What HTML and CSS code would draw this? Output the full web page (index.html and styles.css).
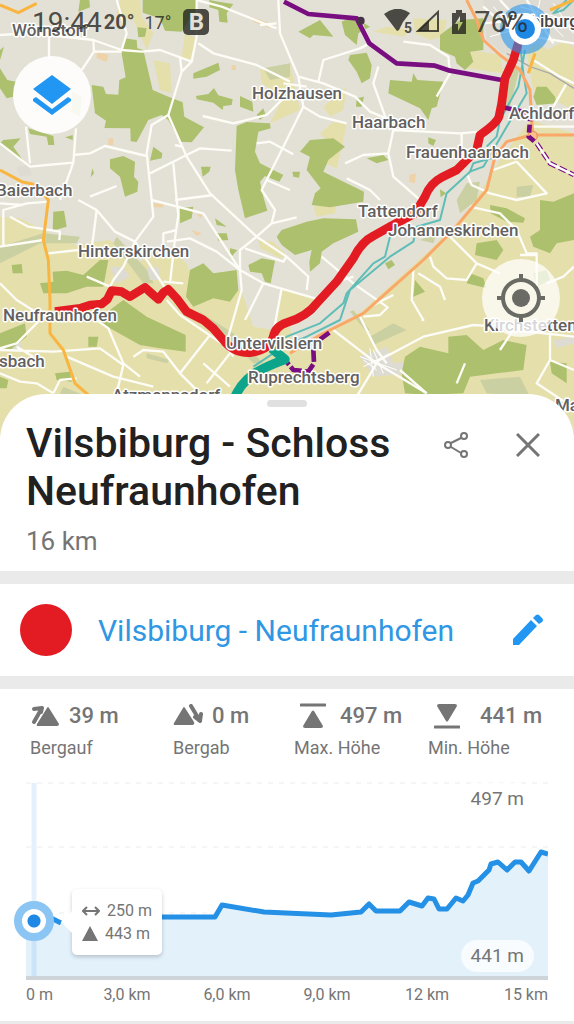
FILE: index.html
```html
<!DOCTYPE html>
<html lang="de">
<head>
<meta charset="UTF-8">
<meta name="viewport" content="width=device-width, initial-scale=1.0">
<title>Vilsbiburg - Schloss Neufraunhofen</title>
<link rel="stylesheet" href="styles.css">
</head>
<body>

<section class="map">
  <svg class="map-canvas" viewBox="0 0 574 440" preserveAspectRatio="xMidYMin slice" aria-label="Karte">
    <g transform="scale(.333333)">
      <rect class="land" width="1722" height="1320"/>

      <!-- fields -->
      <g class="field">
        <path d="M0 650L60 655L150 700L225 735L330 720L410 790L500 740L560 790L590 880L725 870L760 980L820 990L845 865L945 895L870 980L880 1040L1000 990L1090 930L1190 840L1290 750L1400 640L1500 480L1590 360L1722 400V1320H0Z"/>
        <path d="M1722 110L1640 150L1600 110L1580 160L1600 270L1722 330Z"/>
        <path d="M360 0H420L425 50L460 100L440 150L400 60L350 45Z"/>
        <path d="M460 180L510 190L515 280L480 270Z"/>
        <path d="M555 100L590 115L570 180L545 175Z"/>
        <path d="M780 210L870 190L900 330L810 370L850 290L785 250Z"/>
        <path d="M1000 365L1040 370L1030 420L1010 505L975 490L985 430L960 400Z"/>
        <path d="M1240 55L1340 60L1330 110L1290 120L1245 100Z"/>
        <path d="M1410 150L1500 165L1510 220L1400 205Z"/>
        <path d="M970 320L1040 260L1030 330L990 350Z"/>
        <path d="M940 620L1010 612L1005 640L950 650Z"/>
        <path d="M775 720L820 725L860 765L840 775L780 745Z"/>
        <path d="M1120 95L1160 80L1230 90L1210 110Z"/>
      </g>
      <g class="meadow">
        <path d="M1540 200L1560 200L1530 320L1500 350Z"/>
        <path d="M1370 600L1400 550L1440 545L1430 600L1380 640Z"/>
        <path d="M790 205L870 190V230L810 240Z"/>
        <path d="M350 710L450 820L460 850L430 850L340 730Z"/>
        <path d="M0 740L130 700L240 710L230 730L120 730L0 790Z"/>
        <path d="M1110 1010L1180 970L1220 990L1120 1035Z"/>
        <path d="M1440 1140L1560 1130L1590 1190L1460 1180Z"/>
        <path d="M440 1060L510 1080L500 1090L440 1075Z"/>
        <path d="M190 1160L250 1185L230 1200L180 1180Z"/>
        <path d="M1060 930L1110 990L1095 990L1050 935Z"/>
        <path d="M590 930L700 1000L790 1090L760 1090L680 1010Z"/>
        <path d="M1550 560L1600 555L1590 590L1550 590Z"/>
        <path d="M1260 720L1310 700L1300 730Z"/>
      </g>

      <!-- built-up areas -->
      <g class="town">
        <path d="M1450 0H1722V140L1650 110L1600 140L1510 160L1460 120Z"/>
        <path d="M1080 1070L1160 1040L1180 1090L1240 1080L1230 1120L1120 1130Z"/>
        <path d="M50 500L85 495L95 525L60 530Z"/>
        <path d="M330 800L370 800L390 830L350 850Z"/>
        <path d="M440 805L475 800L480 840L450 840Z"/>
        <path d="M30 1020L60 1015L65 1050L40 1055Z"/>
        <path d="M1660 1020L1722 1010V1030L1670 1045Z"/>
      </g>
      <g class="farm">
        <path d="M290 155L325 165L320 185L290 175Z"/>
        <path d="M325 415H340V435H325Z"/>
        <path d="M750 50L800 65L810 85L760 65Z"/>
        <path d="M460 610H490V622H460Z"/>
        <path d="M590 645L605 640V655Z"/>
        <path d="M575 690L605 700L590 708Z"/>
        <path d="M1228 525L1248 520L1245 550L1228 545Z"/>
        <path d="M695 195H708V210H695Z"/>
      </g>

      <!-- woods -->
      <g class="wood">
        <path d="M372 115L410 120L412 145L430 150L458 270L500 288L548 307L553 350L612 382L575 427L540 425L505 360L485 345L445 360L410 426L392 424L391 385L313 384L318 362L285 340L275 255L310 260L318 282L355 284L358 240L377 232L365 160Z"/>
        <path d="M428 0H590V45L570 55L545 95L495 92L480 55L428 38Z"/>
        <path d="M240 0H268L270 22L235 35Z"/>
        <path d="M412 82L440 85L435 110L415 112Z"/>
        <path d="M628 0L655 5L700 12L680 40L683 68L658 65L655 30L628 22Z"/>
        <path d="M580 220L655 188L660 210L620 230L580 236Z"/>
        <path d="M588 288L625 282L642 264L655 286L698 298L695 315L670 318L668 330L640 308L590 298Z"/>
        <path d="M720 288L757 305L760 335L720 320Z"/>
        <path d="M770 345L790 325L797 345L780 360Z"/>
        <path d="M710 378L740 366L810 370L812 385L775 395L765 455L780 490L850 525L838 545L795 528L780 545L790 590L802 632L735 655L715 570L705 510Z"/>
        <path d="M0 205L22 240L48 245L40 290L20 295L0 265Z"/>
        <path d="M10 420L62 415L40 440L75 490L0 430Z"/>
        <path d="M85 385L160 408L163 435L145 435L140 410L90 402Z"/>
        <path d="M215 275L245 290L240 350L215 335Z"/>
        <path d="M330 478L370 468L405 485L402 530L415 545L412 575L375 590L360 530L330 505Z"/>
        <path d="M460 440L487 460L485 475L450 482Z"/>
        <path d="M603 500L632 500L628 515L608 530Z"/>
        <path d="M195 412L218 405V420Z"/>
        <path d="M277 505L282 520L272 532Z"/>
        <path d="M0 150L12 140L0 180Z"/>
        <path d="M895 95L960 60L1000 110L940 105L930 115Z"/>
        <path d="M1025 65L1060 50L1110 80L1075 100L1070 135L1035 105Z"/>
        <path d="M1050 165L1100 158L1115 195L1110 235L1085 250L1070 215L1045 180Z"/>
        <path d="M1170 240L1235 245L1240 220L1252 240L1330 245L1310 320L1295 325L1285 360L1260 325L1165 280Z"/>
        <path d="M1070 295L1092 290L1085 320H1068Z"/>
        <path d="M1320 105L1380 60L1450 55L1450 150L1410 155L1420 185L1395 210L1370 190L1365 170L1320 150Z"/>
        <path d="M900 455L930 420L1000 415L1035 440L985 480L970 515L1020 540L1092 575L1090 605L990 622L935 615L945 580L962 565L920 510L930 470Z"/>
        <path d="M830 710L845 690L920 665L970 655L1068 658L1075 695L1000 730L965 755L960 790L930 815L928 785L935 750L885 765L845 735Z"/>
        <path d="M877 515L900 515L897 533L880 530Z"/>
        <path d="M1285 412L1308 420L1300 438L1285 430Z"/>
        <path d="M1100 475L1150 465L1165 480L1130 490Z"/>
        <path d="M1320 568L1338 580L1322 592Z"/>
        <path d="M1610 260L1640 260L1665 290L1670 310L1610 315L1600 290Z"/>
        <path d="M1470 615L1520 625L1575 655L1570 668L1520 665L1472 640Z"/>
        <path d="M1620 600L1660 605L1722 580V720L1670 730L1650 760L1600 740L1590 710L1620 690Z"/>
        <path d="M1430 730L1490 720L1510 750L1490 780L1425 765Z"/>
        <path d="M1410 820L1450 835L1460 865L1400 850Z"/>
        <path d="M1245 840L1275 875L1240 890Z"/>
        <path d="M1345 1010L1400 1005L1450 1050L1510 1020L1580 1035L1570 1110L1490 1120L1410 1130L1390 1180L1280 1185L1215 1180L1205 1120L1215 1070L1260 1040L1345 1060Z"/>
        <path d="M1650 1085L1700 1090V1150L1655 1120Z"/>
        <path d="M1155 790L1175 780L1185 795L1165 808Z"/>
        <path d="M1600 820L1640 810L1650 840L1610 860Z"/>
        <path d="M160 635L192 632L200 680L158 692Z"/>
        <path d="M120 850L160 845L158 815L200 812L250 825L300 780L325 780L310 860L260 860L200 880L130 880Z"/>
        <path d="M570 810L610 790L640 820L710 810L715 870L690 905L640 895L580 920L558 890Z"/>
        <path d="M290 960L370 900L440 950L557 1005V1055L480 1045L420 1035L330 985Z"/>
        <path d="M745 795L785 775L825 782L812 850L795 845L785 820L750 815Z"/>
        <path d="M645 655L680 680L650 675Z"/>
        <path d="M650 700L680 700L685 720L655 722Z"/>
        <path d="M540 625L580 620L575 655L540 670Z"/>
        <path d="M35 795L65 792L68 820L38 820Z"/>
        <path d="M0 1000L75 970L80 1010L30 1050L0 1040Z"/>
        <path d="M165 1120L210 1115L215 1145L170 1140Z"/>
        <path d="M265 1010L295 1010L290 1040H265Z"/>
        <path d="M0 1130L25 1140L20 1165H0Z"/>
        <path d="M690 745L712 750L690 775Z"/>
      </g>

      <!-- minor roads -->
      <g class="road">
        <path d="M350 0L380 100L365 150L425 155L480 150L575 185L590 110L590 0"/>
        <path d="M0 105L80 100L147 105L280 120L365 150M147 105V180M280 120L282 155L365 155M282 155L245 210"/>
        <path d="M575 185L545 215L505 345L455 375L440 460L455 600L460 650L405 725"/>
        <path d="M505 345L560 470L630 580L770 710L720 750L720 810L725 870L685 1010"/>
        <path d="M860 420L785 570L825 630L815 670L770 710M815 670L890 652M770 710L860 770L925 830L920 870"/>
        <path d="M610 640L720 810L790 850L945 895M735 745L850 785L860 770M790 850L735 960M845 865L820 1000"/>
        <path d="M540 170L545 215M595 130L640 160L770 195L870 245"/>
        <path d="M608 348L700 370L800 345L840 305L860 290"/>
        <path d="M0 430L90 500L140 495L220 488L228 385M78 380L90 490M220 488L180 600M220 465L270 460L315 438L440 468"/>
        <path d="M450 520L560 465L600 445L695 452M520 490L530 600L535 645"/>
        <path d="M525 435L545 440M270 590L350 558M640 585L525 600"/>
        <path d="M835 0L840 100L895 230L910 320L860 420M770 430L810 425L880 463M800 540L870 570"/>
        <path d="M895 230L970 250L1065 290L1110 335L1170 360M1135 200L1120 250L1170 390"/>
        <path d="M1080 60L1110 130L1080 145L970 180L955 245M1210 125L1290 135L1345 170L1350 220L1310 290"/>
        <path d="M1035 490L1090 465L1165 460L1180 390L1380 400L1440 395M1165 460L1180 530L1260 600M1040 535L1110 570L1140 600"/>
        <path d="M910 320L960 350L1040 370M850 250L920 260"/>
        <path d="M590 0L665 20L830 85M830 70L780 75"/>
        <path d="M1385 400V450M1400 520L1415 555L1470 580L1550 600L1640 580L1550 485M1480 510L1550 485"/>
        <path d="M0 610L70 615M10 740V630L80 610L145 605M30 650L85 680L180 695L178 720"/>
        <path d="M0 740L130 720M145 760L235 750L290 745"/>
        <path d="M235 600L290 630L345 695L405 725L460 810L500 870M290 630L280 710L275 740"/>
        <path d="M260 830L330 860L340 840L370 800L405 725"/>
        <path d="M455 600L610 640M535 645L525 715L510 850M490 750V700L530 690M500 725L570 715L650 755L720 810"/>
        <path d="M490 845L550 850M500 900L540 945L680 1040L700 1070"/>
        <path d="M0 850L50 900L130 950L50 1030L0 1045M290 960L325 985L370 1090L420 1130"/>
        <path d="M0 1050L160 1055L300 1045L370 1095L350 1180M200 1070L340 1130L460 1160M50 1040L100 1070"/>
        <path d="M0 1120L60 1145L110 1150L160 1180M160 1180L180 1140L230 1135"/>
        <path d="M400 1070L430 1050L490 1055L540 1120L600 1180M540 1120L630 1005M610 1090L690 1160M690 1060L620 1150"/>
        <path d="M965 770L1060 850L1160 920M1030 840L1060 830M1110 920L1180 885M1080 950L1130 1050L1160 1090"/>
        <path d="M1000 990L1130 1090L1280 1180M1120 1090L1270 1010L1420 975L1500 980M1130 1090L1070 1190"/>
        <path d="M1240 810L1235 900L1270 960L1265 960M1255 820L1320 860L1335 900M1090 950L1140 945L1165 920"/>
        <path d="M1350 710L1430 790L1400 840L1340 835L1300 800L1290 770M1430 790L1500 820"/>
        <path d="M1410 620L1500 640L1550 690L1580 760L1610 760V880M1560 765H1610"/>
        <path d="M1640 850L1690 830L1722 800"/>
        <path d="M1500 1050L1540 990L1722 1010M1650 1000V1080L1610 1150L1700 1210M1650 1080L1722 1110"/>
        <path d="M1395 1090L1370 1150M1200 1110L1280 1180"/>
        <path d="M1450 20L1540 100L1722 130M1500 0L1600 110M1580 0L1660 130M1450 70L1560 60L1722 80"/>
        <path d="M1600 180L1680 230L1722 250M1700 250L1660 320M1600 380H1722"/>
      </g>
      <path class="street" d="M1080 1070L1190 1110M1090 1100L1170 1060M1120 1050L1150 1120M1090 1080L1130 1110M1110 1045L1120 1130M1480 20L1560 110M1600 20L1690 110M1620 0L1600 100M1660 10L1720 100M1560 20L1700 60M1470 110L1540 90"/>

      <!-- rail, river and main roads -->
      <path class="rail" d="M1520 160L1590 200L1650 220L1722 265"/>
      <path class="river" d="M1560 130L1570 220L1580 280L1520 380L1450 500L1410 515L1420 490L1490 470M1410 515L1340 580L1320 660L1250 680L1240 725L1170 770L1050 870L1020 960L920 1010L850 1040L760 1100M1575 150L1555 260L1500 360L1490 410L1460 440M1190 690L1170 710L1155 770L1120 790L1040 880L1030 910L960 970L860 1010L800 1040M1700 0L1660 40L1690 30L1722 0"/>
      <path class="main-road" d="M1400 0L1430 60L1450 120L1500 165L1560 210L1590 270L1598 405M1722 405L1595 405L1520 425L1485 470L1460 570L1360 690L1270 780L1180 860L1090 940L960 1005L870 1060"/>
      <path class="main-road amber" d="M0 15L55 38L110 10M0 510L65 545L110 555L145 600L130 720L145 780L150 900L150 1000L190 1050L225 1150L265 1185M1605 160L1585 220M1720 0L1650 30"/>
      <circle class="junction" cx="1598" cy="408" r="14"/>

      <!-- neighbouring tours -->
      <path class="tour" d="M852 5L925 42L1070 55L1108 130L1190 190L1305 197L1350 212L1505 240"/>
      <path class="tour" d="M1510 322L1590 340"/>
      <path class="tour dashed" d="M1592 340L1586 410L1610 430L1650 490L1722 525"/>
      <path class="tour-gap" d="M1610 430L1650 490L1722 525"/>
      <path class="tour" d="M988 998L960 1018M940 1048L942 1090L925 1115L880 1110L857 1082" stroke-dasharray="38 8"/>
      <path class="tour-teal" d="M700 1200C730 1130 770 1110 855 1078L815 1045"/>

      <!-- selected tour -->
      <path class="tour-main" d="M1565 95L1540 180L1515 235L1505 310L1497 350Q1490 370 1440 405L1430 450L1370 510L1325 532Q1290 550 1275 590L1245 640L1170 680L1120 708Q1085 725 1060 775L1010 845L950 910Q920 950 860 968Q825 980 820 1010Q810 1050 750 1058Q700 1060 670 1020L640 985L610 960L560 935L530 895L505 868L490 878L475 898L460 885L435 862L390 890L365 875L335 872L322 898L305 912L270 915L240 925L165 935"/>
      <circle class="tour-start" cx="1082" cy="62" r="12"/>
    </g>

    <circle cx="525" cy="29" r="25" fill="#2996f0" opacity=".6"/>
    <g class="labels">
      <text x="12" y="36">Wörnstorf</text>
      <text x="252" y="99">Holzhausen</text>
      <text x="352" y="128">Haarbach</text>
      <text x="406" y="158">Frauenhaarbach</text>
      <text x="509" y="119">Achldorf</text>
      <text x="-4" y="196">Baierbach</text>
      <text x="358" y="217">Tattendorf</text>
      <text x="388" y="236">Johanneskirchen</text>
      <text x="78" y="257">Hinterskirchen</text>
      <text x="3" y="321">Neufraunhofen</text>
      <text x="-1" y="367">sbach</text>
      <text x="226" y="349">Untervilslern</text>
      <text x="248" y="383">Ruprechtsberg</text>
      <text x="484" y="331">Kirchstetten</text>
      <text x="112" y="401">Atzmannsdorf</text>
      <text x="555" y="411">Maria</text>
      <text x="502" y="27" class="city">Vilsbiburg</text>
    </g>
    <circle cx="525" cy="29" r="16" fill="#fff"/>
    <circle cx="525" cy="29" r="10" fill="#1e88e5"/>
  </svg>

  <div class="status-bar">
    <span class="clock">19:44</span>
    <span class="temp-now">20°</span>
    <span class="temp-low">17°</span>
    <span class="app-badge">B</span>
    <span class="status-right">
      <svg width="28" height="26" viewBox="0 0 28 26"><path d="M0 5Q13-5 26 4L19 13L15 21L13 22Z" fill="currentColor"/><text x="20" y="24" class="wifi-band">5</text></svg>
      <svg width="24" height="24" viewBox="0 0 24 24"><path d="M2 21H22V2Z" fill="none" stroke="currentColor" stroke-width="2"/><path d="M2 21H13V10Z" fill="currentColor"/></svg>
      <svg class="battery" width="14" height="24" viewBox="0 0 14 24"><path fill="currentColor" fill-rule="evenodd" d="M4 0H10V3H14V24H0V3H4ZM8 6L3 14H6V21L11 12H8Z"/></svg>
      <span class="percent">76%</span>
    </span>
  </div>

  <button type="button" class="map-button layers" aria-label="Kartenebenen">
    <svg width="38" height="42" viewBox="0 0 38 42"><path fill="#2196f3" d="M19 1L38 15L19 30L0 15ZM0 25L3 23L19 35L35 23L38 25V27L19 41L0 27Z"/></svg>
  </button>
  <button type="button" class="map-button locate" aria-label="Mein Standort">
    <svg width="48" height="48" viewBox="0 0 48 48"><circle cx="24" cy="24" r="9" fill="#6b6b66"/><circle cx="24" cy="24" r="18" fill="none" stroke="#6b6b66" stroke-width="4"/><path d="M24 0V8M24 40V48M0 24H8M40 24H48" stroke="#6b6b66" stroke-width="4"/></svg>
  </button>
</section>

<main class="sheet">
  <div class="handle"></div>

  <header class="sheet-header">
    <div class="heading">
      <h1>Vilsbiburg - Schloss Neufraunhofen</h1>
      <p class="distance">16 km</p>
    </div>
    <button type="button" class="icon-button" aria-label="Teilen">
      <svg width="26" height="28" viewBox="0 0 26 28" fill="none" stroke="#757575" stroke-width="2"><circle cx="21" cy="5" r="3"/><circle cx="5" cy="14" r="3"/><circle cx="21" cy="23" r="3"/><path d="M18 7L8 12M8 16L18 22"/></svg>
    </button>
    <button type="button" class="icon-button" aria-label="Schließen">
      <svg width="24" height="24" viewBox="0 0 24 24"><path d="M1 1L23 23M23 1L1 23" stroke="#757575" stroke-width="3"/></svg>
    </button>
  </header>

  <section class="track">
    <span class="track-color"></span>
    <a href="#track" class="track-name">Vilsbiburg - Neufraunhofen</a>
    <button type="button" class="icon-button" aria-label="Bearbeiten">
      <svg width="30" height="32" viewBox="0 0 30 32"><path fill="#2196f3" d="M0 25L18 6L24 12L6 31H0ZM20 4L23 1Q25 0 26 1L29 4Q31 6 29 8L26 10Z"/></svg>
    </button>
  </section>

  <section class="elevation" id="track">
    <dl class="stats">
      <div class="stat">
        <dt>Bergauf</dt>
        <dd><svg width="30" height="24" viewBox="0 0 30 24"><path d="M17 4Q18 2 19 4L29 20Q29 22 27 22H8Q6 22 7 20Z" fill="#757575"/><path d="M4 5L12 4L4 18M12 4L11 8" fill="none" stroke="#757575" stroke-width="4" stroke-linecap="round" stroke-linejoin="round"/></svg>39 m</dd>
      </div>
      <div class="stat">
        <dt>Bergab</dt>
        <dd><svg width="30" height="24" viewBox="0 0 30 24"><path d="M10 4Q11 2 12 4L21 18Q22 21 19 21H2Q0 21 1 19Z" fill="#757575"/><path d="M18 2L27 17L28 10M27 17L22 13" fill="none" stroke="#757575" stroke-width="4" stroke-linecap="round" stroke-linejoin="round"/></svg>0 m</dd>
      </div>
      <div class="stat">
        <dt>Max. Höhe</dt>
        <dd><svg width="26" height="26" viewBox="0 0 26 26"><path d="M1 2H25" stroke="#757575" stroke-width="3" stroke-linecap="round"/><path d="M12 8Q13 7 14 8L23 23Q23 25 21 25H5Q3 25 3 23Z" fill="#757575"/></svg>497 m</dd>
      </div>
      <div class="stat">
        <dt>Min. Höhe</dt>
        <dd><svg width="26" height="26" viewBox="0 0 26 26"><path d="M1 24H25" stroke="#757575" stroke-width="3" stroke-linecap="round"/><path d="M12 18Q13 19 14 18L23 3Q23 1 21 1H5Q3 1 3 3Z" fill="#757575"/></svg>441 m</dd>
      </div>
    </dl>

    <div class="chart">
      <svg class="chart-canvas" viewBox="0 0 522 198" preserveAspectRatio="none" aria-label="Höhenprofil">
        <path class="grid" d="M0 1H522M0 65H522M0 131H522"/>
        <path class="area" d="M0 139H20L27 136L35 141L60 138L136 135H189L196 123L238 130L260 131L305 133L335 130L343 122L350 129H374L383 120L396 124L402 116L408 117L413 127H421L430 116L437 119L442 113L447 101L452 99L463 88L465 82L472 80L481 88L489 80H495L503 89L515 70L522 72V198H0Z"/>
        <path class="cursor" d="M8 1V196"/>
        <path class="base" d="M0 196H522"/>
        <path class="line" d="M20 139L27 137L35 141M136 135H189L196 123L238 130L260 131L305 133L335 130L343 122L350 129H374L383 120L396 124L402 116L408 117L413 127H421L430 116L437 119L442 113L447 101L452 99L463 88L465 82L472 80L481 88L489 80H495L503 89L515 70L522 72"/>
      </svg>
      <span class="chart-dot"></span>
      <div class="chart-tip">
        <span><svg width="18" height="12" viewBox="0 0 18 12" fill="none" stroke="#757575" stroke-width="2"><path d="M1 6H17M5 2L1 6L5 10M13 2L17 6L13 10"/></svg>250 m</span>
        <span><svg width="16" height="16" viewBox="0 0 16 16"><path d="M8 0L16 15H0Z" fill="#757575"/></svg>443 m</span>
      </div>
      <span class="chart-max">497 m</span>
      <span class="chart-min">441 m</span>
    </div>
    <div class="axis">
      <span>0 m</span>
      <span>3,0 km</span>
      <span>6,0 km</span>
      <span>9,0 km</span>
      <span>12 km</span>
      <span>15 km</span>
    </div>
  </section>
</main>

</body>
</html>
```
FILE: styles.css
```css
* {
  box-sizing: border-box;
}

body {
  margin: 0;
  background: #fff;
  color: #757575;
  font-family: Roboto, sans-serif;
}

button {
  display: flex;
  align-items: center;
  justify-content: center;
  padding: 0;
  border: none;
  background: none;
  cursor: pointer;
}

svg {
  display: block;
  flex: none;
}

/* map */
.map {
  position: relative;
  height: 440px;
  overflow: hidden;
}

.map-canvas {
  width: 100%;
  height: 100%;
}

.land { fill: #e3e1d5; }
.field { fill: #e5dfab; }
.meadow { fill: #cbd0a3; }
.town { fill: #dddbd2; }
.farm { fill: #eed2a8; }
.wood { fill: #adc06d; }

.road,
.street,
.rail,
.river,
.main-road,
.tour,
.tour-gap,
.tour-teal,
.tour-main {
  fill: none;
  stroke-linejoin: round;
}

.road {
  stroke: #fdfcf6;
  stroke-width: 7;
}

.street {
  stroke: #fff;
  stroke-width: 3;
}

.rail {
  stroke: #aaa;
  stroke-width: 4;
}

.river {
  stroke: #5fbdb8;
  stroke-width: 6;
}

.main-road {
  stroke: #f9a868;
  stroke-width: 9;
}

.main-road.amber {
  stroke: #f9b540;
}

.junction {
  fill: #f9c090;
  stroke: #f09050;
  stroke-width: 4;
}

.tour {
  stroke: #780e80;
  stroke-width: 14;
}

.tour.dashed {
  stroke-width: 14;
  stroke-dasharray: 24 10;
}

.tour-gap {
  stroke: #fff;
  stroke-width: 7;
}

.tour-teal {
  stroke: #0ca58c;
  stroke-width: 28;
}

.tour-main {
  stroke: #e31b23;
  stroke-width: 26;
}

.tour-start {
  fill: #463147;
}

.labels {
  font-size: 17px;
  font-weight: 500;
  fill: #626060;
  stroke: #fff;
  stroke-width: 3px;
  stroke-linejoin: round;
  paint-order: stroke;
}

.labels .city {
  fill: #444;
}

.status-bar {
  position: absolute;
  top: 4px;
  left: 32px;
  right: 46px;
  height: 36px;
  display: flex;
  align-items: center;
  color: rgba(35, 35, 30, 0.8);
}

.clock {
  font-size: 28px;
}

.temp-now {
  margin-left: 2px;
  font-size: 20px;
  font-weight: 700;
}

.temp-low {
  margin-left: 10px;
  font-size: 18px;
}

.app-badge {
  width: 26px;
  height: 26px;
  margin-left: 12px;
  border-radius: 5px;
  background: rgba(35, 35, 30, 0.8);
  color: #e3e1d5;
  font-size: 24px;
  font-weight: 700;
  line-height: 26px;
  text-align: center;
}

.status-right {
  display: flex;
  align-items: center;
  gap: 4px;
  margin-left: auto;
}

.wifi-band {
  font-size: 14px;
  font-weight: 700;
  fill: currentColor;
}

.battery {
  margin: 0 4px 0 8px;
}

.percent {
  font-size: 29px;
}

.map-button {
  position: absolute;
  width: 78px;
  height: 78px;
  border-radius: 50%;
}

.layers {
  top: 56px;
  left: 13px;
  background: rgba(255, 255, 255, 0.9);
}

.locate {
  top: 259px;
  right: 14px;
  background: rgba(255, 255, 255, 0.75);
}

/* bottom sheet */
.sheet {
  position: relative;
  margin-top: -46px;
  padding-top: 6px;
  border-radius: 46px 46px 0 0;
  background: #fff;
}

.handle {
  width: 40px;
  height: 7px;
  margin: 0 auto;
  border-radius: 4px;
  background: #e0e0e0;
}

.sheet-header {
  display: flex;
  align-items: flex-start;
  padding: 12px 20px 10px 26px;
}

.heading {
  flex: 1;
}

h1 {
  max-width: 400px;
  margin: 0;
  color: #212121;
  font-size: 41px;
  font-weight: 500;
  line-height: 48px;
}

.distance {
  margin: 6px 0 0;
  font-size: 26px;
  line-height: 40px;
}

.icon-button {
  width: 52px;
  height: 52px;
}

.sheet-header .icon-button {
  margin-left: 20px;
}

.track {
  display: flex;
  align-items: center;
  height: 118px;
  padding: 0 20px;
  border: solid #eaeaea;
  border-width: 13px 0;
}

.track-color {
  width: 52px;
  height: 52px;
  border-radius: 50%;
  background: #e31b23;
}

.track-name {
  flex: 1;
  margin-left: 26px;
  color: #2f97e4;
  font-size: 30px;
  text-decoration: none;
}

/* elevation profile */
.elevation {
  padding: 10px 26px 16px;
  border-bottom: 3px solid #eaeaea;
}

.stats {
  display: grid;
  grid-template-columns: 143fr 121fr 134fr 120fr;
  margin: 0 0 18px 4px;
}

.stat {
  display: flex;
  flex-direction: column-reverse;
}

.stat dd {
  display: flex;
  align-items: center;
  gap: 9px;
  height: 33px;
  margin: 0;
  font-size: 22px;
  font-weight: 500;
  white-space: nowrap;
}

.stat:nth-child(n+3) dd {
  gap: 14px;
  padding-left: 6px;
}

.stat:last-child dd {
  gap: 20px;
}

.stat dt {
  font-size: 18px;
  line-height: 32px;
}

.chart {
  position: relative;
  height: 198px;
}

.chart-canvas {
  width: 100%;
  height: 100%;
}

.grid {
  fill: none;
  stroke: #ececec;
  stroke-dasharray: 5 6;
}

.area {
  fill: #e3f1fb;
}

.cursor {
  stroke: #1e88e5;
  stroke-opacity: 0.12;
  stroke-width: 5;
}

.base {
  stroke: #cdd5da;
  stroke-width: 4;
}

.line {
  fill: none;
  stroke: #2490e6;
  stroke-width: 5;
  stroke-linejoin: round;
}

.chart-dot {
  position: absolute;
  top: 119px;
  left: -12px;
  width: 40px;
  height: 40px;
  border: 8px solid #8ac5f4;
  border-radius: 50%;
  background: radial-gradient(circle, #1e88e5 6px, #fff 7px);
}

.chart-tip {
  position: absolute;
  top: 107px;
  left: 46px;
  width: 90px;
  padding: 10px;
  border-radius: 5px;
  background: #fff;
  box-shadow: 0 2px 4px rgba(0, 0, 0, 0.2);
  font-size: 16px;
  line-height: 23px;
}

.chart-tip::before {
  content: "";
  position: absolute;
  top: 22px;
  left: -11px;
  border: solid transparent;
  border-width: 11px 11px 11px 0;
  border-right-color: #fff;
}

.chart-tip span {
  display: flex;
  align-items: center;
  gap: 7px;
}

.chart-max,
.chart-min {
  position: absolute;
  right: 14px;
  padding: 0 10px;
  border-radius: 16px;
  background: rgba(255, 255, 255, 0.75);
  font-size: 19px;
  line-height: 32px;
}

.chart-max {
  top: 1px;
}

.chart-min {
  bottom: 8px;
}

.axis {
  display: grid;
  grid-template-columns: 51px repeat(4, 1fr) 71px;
  margin-top: 4px;
  font-size: 16px;
  line-height: 21px;
  text-align: center;
}

.axis span:first-child {
  text-align: left;
}

.axis span:last-child {
  text-align: right;
}
```
